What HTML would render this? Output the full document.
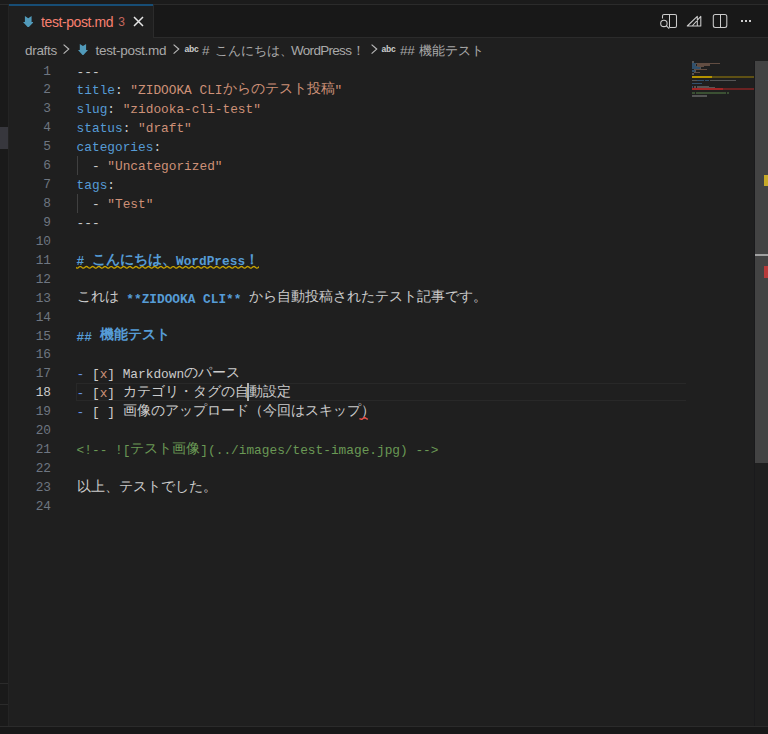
<!DOCTYPE html>
<html><head><meta charset="utf-8">
<style>
*{margin:0;padding:0;box-sizing:border-box}
html,body{width:768px;height:734px;overflow:hidden;background:#1f1f1f}
body{position:relative;font-family:"Liberation Sans",sans-serif}
.a{position:absolute}
#topstrip{left:0;top:0;width:768px;height:4px;background:#1b1b1b}
#topline{left:0;top:4px;width:768px;height:1px;background:#2b2b2b}
#left{left:0;top:5px;width:8px;height:721px;background:#1a1a1a}
#leftb{left:8px;top:5px;width:1px;height:721px;background:#242424}
#leftsel{left:0;top:127px;width:8px;height:22px;background:#37373d}
#tabbar{left:9px;top:5px;width:759px;height:32px;background:#181818}
#tabbarb{left:9px;top:37px;width:759px;height:1px;background:#2b2b2b}
#tab{left:9px;top:4px;width:144px;height:34px;background:#1f1f1f}
#tabtop{left:9px;top:4px;width:144px;height:2px;background:#174d75}
#tabr{left:153px;top:5px;width:1px;height:32px;background:#2b2b2b}
.tabt{left:41px;top:15.05px;font-size:14px;letter-spacing:-0.4px;color:#f88070;white-space:nowrap;line-height:1}
.tab3{left:118.3px;top:15.74px;font-size:12px;color:#c4665c;line-height:1}
.bc{top:43.57px;font-size:13.5px;letter-spacing:-0.3px;color:#a9a9a9;white-space:nowrap;line-height:1}
.abc{top:44.8px;font-size:8.5px;font-weight:bold;color:#cccccc;line-height:8px;letter-spacing:-0.2px}
#status{left:0;top:726px;width:768px;height:1px;background:#2b2b2b}
#statusbg{left:0;top:727px;width:768px;height:7px;background:#181818}
.ln{position:absolute;left:9px;width:42px;text-align:right;height:18.93px;line-height:18.93px;font-family:"Liberation Mono",monospace;font-size:12.8px;color:#6e7681}
.ln.cur{color:#cccccc}
.cl{position:absolute;left:76.6px;height:18.93px;line-height:18.93px;font-family:"Liberation Mono",monospace;font-size:12.8px;white-space:nowrap;color:#cccccc}
.cl span{vertical-align:top;position:relative;top:1px}
.cl span.j{display:inline-block;font-size:14px;overflow:visible;white-space:nowrap;position:relative;top:-1.3px}
.d{color:#cccccc}.k{color:#569cd6}.p{color:#cccccc}.s{color:#ce9178}
.h{color:#569cd6;font-weight:bold}.b{color:#569cd6;font-weight:bold}
.l{color:#6796e6}.x{color:#ce9178}.t{color:#cccccc}.c{color:#6a9955}
#curline{left:76px;top:383px;width:610px;height:18px;border:1px solid #282828;border-right:none}
.guide{left:76.5px;width:1px;background:#404040}
#caret{left:247px;top:382.5px;width:2px;height:18.5px;background:#aeafad}
#scroll{left:754px;top:61px;width:14px;height:402px;background:#434343}
#scrollb{left:754px;top:61px;width:1px;height:665px;background:#1a1a1c}
.ov{position:absolute}
.mm{position:absolute;height:1.6px}
.bj{font-size:13px;letter-spacing:0;white-space:nowrap}
</style></head><body>
<div id="topstrip" class="a"></div>
<div id="topline" class="a"></div>
<div id="left" class="a"></div>
<div id="leftb" class="a"></div>
<div id="leftsel" class="a"></div>
<div class="a" style="left:0;top:683px;width:8px;height:1px;background:#2b2b2b"></div>
<div class="a" style="left:0;top:704px;width:8px;height:1px;background:#2b2b2b"></div>
<div id="tabbar" class="a"></div>
<div id="tabbarb" class="a"></div>
<div id="tab" class="a"></div>
<div id="tabtop" class="a"></div>
<div id="tabr" class="a"></div>
<svg class="a" style="left:22.9px;top:15.8px" width="10.6" height="11.7" viewBox="0 0 10 11.5" preserveAspectRatio="none"><path d="M1.8 0 L4.95 2.1 L8.1 0 L8.1 6 L10 6 L4.95 11.5 L0 6 L1.8 6 Z" fill="#519aba"/></svg>
<div class="a tabt">test-post.md</div>
<div class="a tab3">3</div>
<svg class="a" style="left:133.3px;top:15.5px" width="11" height="11" viewBox="0 0 11 11"><path d="M1 1 L10 10 M10 1 L1 10" stroke="#e6e6e6" stroke-width="1.5"/></svg>

<!-- breadcrumbs -->
<div class="a bc" id="bc1" style="left:25px">drafts</div>
<svg class="a" style="left:62.5px;top:44.2px" width="7" height="11" viewBox="0 0 7 11"><path d="M0.6 0.6 L5.7 5.1 L0.6 9.6" stroke="#b8b8b8" stroke-width="1.2" fill="none"/></svg>
<svg class="a" style="left:77.9px;top:43.6px" width="10" height="11.5" viewBox="0 0 10 11.5"><path d="M1.8 0 L4.95 2.1 L8.1 0 L8.1 6 L10 6 L4.95 11.5 L0 6 L1.8 6 Z" fill="#519aba"/></svg>
<div class="a bc" id="bc2" style="left:95.5px">test-post.md</div>
<svg class="a" style="left:172.5px;top:44.2px" width="7" height="11" viewBox="0 0 7 11"><path d="M0.6 0.6 L5.7 5.1 L0.6 9.6" stroke="#b8b8b8" stroke-width="1.2" fill="none"/></svg>
<div class="a abc" style="left:184.6px">abc</div>
<div class="a bc" id="bc3" style="left:202px">#</div>
<div class="a bc bj" id="bc4" style="left:215px;width:78px">こんにちは、</div>
<div class="a bc" id="bc5" style="left:291px;letter-spacing:-0.7px">WordPress</div>
<div class="a bc bj" id="bc6" style="left:352px;width:13px">！</div>
<svg class="a" style="left:370.5px;top:44.2px" width="7" height="11" viewBox="0 0 7 11"><path d="M0.6 0.6 L5.7 5.1 L0.6 9.6" stroke="#b8b8b8" stroke-width="1.2" fill="none"/></svg>
<div class="a abc" style="left:381.4px">abc</div>
<div class="a bc" id="bc7" style="left:400px">##</div>
<div class="a bc bj" id="bc8" style="left:419px;width:65px">機能テスト</div>

<!-- top right icons -->
<svg class="a" style="left:656px;top:10px" width="24" height="22" viewBox="0 0 24 22">
 <path d="M6.5 8.6 V6 Q6.5 4.5 8 4.5 H19 Q20.5 4.5 20.5 6 V16 Q20.5 17.5 19 17.5 H13.5" stroke="#cccccc" stroke-width="1.05" fill="none"/>
 <path d="M13.5 4.5 V17.5" stroke="#cccccc" stroke-width="1.05"/>
 <circle cx="7.9" cy="13.4" r="3.2" stroke="#cccccc" stroke-width="1.05" fill="none"/>
 <path d="M10.2 15.7 L13.2 18.7" stroke="#cccccc" stroke-width="1.1"/>
</svg>
<svg class="a" style="left:684px;top:12px" width="20" height="18" viewBox="0 0 20 18">
 <path d="M3.3 14 L13.3 4.3 V14 Z M8.2 14 L16.8 4.3 V14 Z" stroke="#cccccc" stroke-width="1.05" fill="none" stroke-linejoin="round"/>
</svg>
<svg class="a" style="left:710px;top:11px" width="20" height="20" viewBox="0 0 20 20">
 <rect x="3.3" y="3.5" width="13.5" height="13" rx="2" stroke="#cccccc" stroke-width="1.05" fill="none"/>
 <path d="M10.5 3.5 V16.5" stroke="#cccccc" stroke-width="1.05"/>
</svg>
<div class="a" style="left:740.8px;top:20px;width:2px;height:2px;background:#cccccc"></div>
<div class="a" style="left:744.8px;top:20px;width:2px;height:2px;background:#cccccc"></div>
<div class="a" style="left:748.8px;top:20px;width:2px;height:2px;background:#cccccc"></div>

<!-- editor -->
<div id="curline" class="a"></div>
<div class="a guide" style="top:156px;height:18.9px"></div>
<div class="a guide" style="top:194px;height:18.9px"></div>
<div class="ln" style="top:62.50px">1</div>
<div class="ln" style="top:81.43px">2</div>
<div class="ln" style="top:100.36px">3</div>
<div class="ln" style="top:119.29px">4</div>
<div class="ln" style="top:138.22px">5</div>
<div class="ln" style="top:157.15px">6</div>
<div class="ln" style="top:176.08px">7</div>
<div class="ln" style="top:195.01px">8</div>
<div class="ln" style="top:213.94px">9</div>
<div class="ln" style="top:232.87px">10</div>
<div class="ln" style="top:251.80px">11</div>
<div class="ln" style="top:270.73px">12</div>
<div class="ln" style="top:289.66px">13</div>
<div class="ln" style="top:308.59px">14</div>
<div class="ln" style="top:327.52px">15</div>
<div class="ln" style="top:346.45px">16</div>
<div class="ln" style="top:365.38px">17</div>
<div class="ln cur" style="top:384.31px">18</div>
<div class="ln" style="top:403.24px">19</div>
<div class="ln" style="top:422.17px">20</div>
<div class="ln" style="top:441.10px">21</div>
<div class="ln" style="top:460.03px">22</div>
<div class="ln" style="top:478.96px">23</div>
<div class="ln" style="top:497.89px">24</div>
<div class="cl" style="top:62.50px"><span class="d">---</span></div>
<div class="cl" style="top:81.43px"><span class="k">title</span><span class="p">:&nbsp;</span><span class="s">&quot;ZIDOOKA&nbsp;CLI</span><span class="s j" style="width:112.00px">からのテスト投稿</span><span class="s">&quot;</span></div>
<div class="cl" style="top:100.36px"><span class="k">slug</span><span class="p">:&nbsp;</span><span class="s">&quot;zidooka-cli-test&quot;</span></div>
<div class="cl" style="top:119.29px"><span class="k">status</span><span class="p">:&nbsp;</span><span class="s">&quot;draft&quot;</span></div>
<div class="cl" style="top:138.22px"><span class="k">categories</span><span class="p">:</span></div>
<div class="cl" style="top:157.15px"><span class="p">&nbsp;&nbsp;-&nbsp;</span><span class="s">&quot;Uncategorized&quot;</span></div>
<div class="cl" style="top:176.08px"><span class="k">tags</span><span class="p">:</span></div>
<div class="cl" style="top:195.01px"><span class="p">&nbsp;&nbsp;-&nbsp;</span><span class="s">&quot;Test&quot;</span></div>
<div class="cl" style="top:213.94px"><span class="d">---</span></div>
<div class="cl" style="top:251.80px"><span class="h">#&nbsp;</span><span class="h j" style="width:84.00px">こんにちは、</span><span class="h">WordPress</span><span class="h j" style="width:14.00px">！</span></div>
<div class="cl" style="top:289.66px"><span class="t j" style="width:42.00px">これは</span><span class="t">&nbsp;</span><span class="b">**ZIDOOKA&nbsp;CLI**</span><span class="t">&nbsp;</span><span class="t j" style="width:238.00px">から自動投稿されたテスト記事です。</span></div>
<div class="cl" style="top:327.52px"><span class="h">##&nbsp;</span><span class="h j" style="width:70.00px">機能テスト</span></div>
<div class="cl" style="top:365.38px"><span class="l">-</span><span class="t">&nbsp;[</span><span class="x">x</span><span class="t">]&nbsp;Markdown</span><span class="t j" style="width:56.00px">のパース</span></div>
<div class="cl" style="top:384.31px"><span class="l">-</span><span class="t">&nbsp;[</span><span class="x">x</span><span class="t">]&nbsp;</span><span class="t j" style="width:168.00px">カテゴリ・タグの自動設定</span></div>
<div class="cl" style="top:403.24px"><span class="l">-</span><span class="t">&nbsp;[&nbsp;]&nbsp;</span><span class="t j" style="width:252.00px">画像のアップロード（今回はスキップ）</span></div>
<div class="cl" style="top:441.10px"><span class="c">&lt;!--&nbsp;![</span><span class="c j" style="width:70.00px">テスト画像</span><span class="c">](../images/test-image.jpg)&nbsp;--&gt;</span></div>
<div class="cl" style="top:478.96px"><span class="t j" style="width:140.00px">以上、テストでした。</span></div>
<div id="caret" class="a"></div>
<svg class="a" style="left:76px;top:265px" width="183" height="4" viewBox="0 0 183 4"><path d="M0 3 L0.00 2.62 L0.50 2.93 L1.00 3.09 L1.50 3.05 L2.00 2.82 L2.50 2.46 L3.00 2.06 L3.50 1.72 L4.00 1.53 L4.50 1.53 L5.00 1.72 L5.50 2.06 L6.00 2.46 L6.50 2.82 L7.00 3.05 L7.50 3.09 L8.00 2.93 L8.50 2.62 L9.00 2.22 L9.50 1.84 L10.00 1.58 L10.50 1.50 L11.00 1.62 L11.50 1.91 L12.00 2.30 L12.50 2.69 L13.00 2.98 L13.50 3.10 L14.00 3.02 L14.50 2.76 L15.00 2.38 L15.50 1.98 L16.00 1.67 L16.50 1.51 L17.00 1.55 L17.50 1.78 L18.00 2.14 L18.50 2.54 L19.00 2.88 L19.50 3.07 L20.00 3.07 L20.50 2.88 L21.00 2.54 L21.50 2.14 L22.00 1.78 L22.50 1.55 L23.00 1.51 L23.50 1.67 L24.00 1.98 L24.50 2.38 L25.00 2.76 L25.50 3.02 L26.00 3.10 L26.50 2.98 L27.00 2.69 L27.50 2.30 L28.00 1.91 L28.50 1.62 L29.00 1.50 L29.50 1.58 L30.00 1.84 L30.50 2.22 L31.00 2.62 L31.50 2.93 L32.00 3.09 L32.50 3.05 L33.00 2.82 L33.50 2.46 L34.00 2.06 L34.50 1.72 L35.00 1.53 L35.50 1.53 L36.00 1.72 L36.50 2.06 L37.00 2.46 L37.50 2.82 L38.00 3.05 L38.50 3.09 L39.00 2.93 L39.50 2.62 L40.00 2.22 L40.50 1.84 L41.00 1.58 L41.50 1.50 L42.00 1.62 L42.50 1.91 L43.00 2.30 L43.50 2.69 L44.00 2.98 L44.50 3.10 L45.00 3.02 L45.50 2.76 L46.00 2.38 L46.50 1.98 L47.00 1.67 L47.50 1.51 L48.00 1.55 L48.50 1.78 L49.00 2.14 L49.50 2.54 L50.00 2.88 L50.50 3.07 L51.00 3.07 L51.50 2.88 L52.00 2.54 L52.50 2.14 L53.00 1.78 L53.50 1.55 L54.00 1.51 L54.50 1.67 L55.00 1.98 L55.50 2.38 L56.00 2.76 L56.50 3.02 L57.00 3.10 L57.50 2.98 L58.00 2.69 L58.50 2.30 L59.00 1.91 L59.50 1.62 L60.00 1.50 L60.50 1.58 L61.00 1.84 L61.50 2.22 L62.00 2.62 L62.50 2.93 L63.00 3.09 L63.50 3.05 L64.00 2.82 L64.50 2.46 L65.00 2.06 L65.50 1.72 L66.00 1.53 L66.50 1.53 L67.00 1.72 L67.50 2.06 L68.00 2.46 L68.50 2.82 L69.00 3.05 L69.50 3.09 L70.00 2.93 L70.50 2.62 L71.00 2.22 L71.50 1.84 L72.00 1.58 L72.50 1.50 L73.00 1.62 L73.50 1.91 L74.00 2.30 L74.50 2.69 L75.00 2.98 L75.50 3.10 L76.00 3.02 L76.50 2.76 L77.00 2.38 L77.50 1.98 L78.00 1.67 L78.50 1.51 L79.00 1.55 L79.50 1.78 L80.00 2.14 L80.50 2.54 L81.00 2.88 L81.50 3.07 L82.00 3.07 L82.50 2.88 L83.00 2.54 L83.50 2.14 L84.00 1.78 L84.50 1.55 L85.00 1.51 L85.50 1.67 L86.00 1.98 L86.50 2.38 L87.00 2.76 L87.50 3.02 L88.00 3.10 L88.50 2.98 L89.00 2.69 L89.50 2.30 L90.00 1.91 L90.50 1.62 L91.00 1.50 L91.50 1.58 L92.00 1.84 L92.50 2.22 L93.00 2.62 L93.50 2.93 L94.00 3.09 L94.50 3.05 L95.00 2.82 L95.50 2.46 L96.00 2.06 L96.50 1.72 L97.00 1.53 L97.50 1.53 L98.00 1.72 L98.50 2.06 L99.00 2.46 L99.50 2.82 L100.00 3.05 L100.50 3.09 L101.00 2.93 L101.50 2.62 L102.00 2.22 L102.50 1.84 L103.00 1.58 L103.50 1.50 L104.00 1.62 L104.50 1.91 L105.00 2.30 L105.50 2.69 L106.00 2.98 L106.50 3.10 L107.00 3.02 L107.50 2.76 L108.00 2.38 L108.50 1.98 L109.00 1.67 L109.50 1.51 L110.00 1.55 L110.50 1.78 L111.00 2.14 L111.50 2.54 L112.00 2.88 L112.50 3.07 L113.00 3.07 L113.50 2.88 L114.00 2.54 L114.50 2.14 L115.00 1.78 L115.50 1.55 L116.00 1.51 L116.50 1.67 L117.00 1.98 L117.50 2.38 L118.00 2.76 L118.50 3.02 L119.00 3.10 L119.50 2.98 L120.00 2.69 L120.50 2.30 L121.00 1.91 L121.50 1.62 L122.00 1.50 L122.50 1.58 L123.00 1.84 L123.50 2.22 L124.00 2.62 L124.50 2.93 L125.00 3.09 L125.50 3.05 L126.00 2.82 L126.50 2.46 L127.00 2.06 L127.50 1.72 L128.00 1.53 L128.50 1.53 L129.00 1.72 L129.50 2.06 L130.00 2.46 L130.50 2.82 L131.00 3.05 L131.50 3.09 L132.00 2.93 L132.50 2.62 L133.00 2.22 L133.50 1.84 L134.00 1.58 L134.50 1.50 L135.00 1.62 L135.50 1.91 L136.00 2.30 L136.50 2.69 L137.00 2.98 L137.50 3.10 L138.00 3.02 L138.50 2.76 L139.00 2.38 L139.50 1.98 L140.00 1.67 L140.50 1.51 L141.00 1.55 L141.50 1.78 L142.00 2.14 L142.50 2.54 L143.00 2.88 L143.50 3.07 L144.00 3.07 L144.50 2.88 L145.00 2.54 L145.50 2.14 L146.00 1.78 L146.50 1.55 L147.00 1.51 L147.50 1.67 L148.00 1.98 L148.50 2.38 L149.00 2.76 L149.50 3.02 L150.00 3.10 L150.50 2.98 L151.00 2.69 L151.50 2.30 L152.00 1.91 L152.50 1.62 L153.00 1.50 L153.50 1.58 L154.00 1.84 L154.50 2.22 L155.00 2.62 L155.50 2.93 L156.00 3.09 L156.50 3.05 L157.00 2.82 L157.50 2.46 L158.00 2.06 L158.50 1.72 L159.00 1.53 L159.50 1.53 L160.00 1.72 L160.50 2.06 L161.00 2.46 L161.50 2.82 L162.00 3.05 L162.50 3.09 L163.00 2.93 L163.50 2.62 L164.00 2.22 L164.50 1.84 L165.00 1.58 L165.50 1.50 L166.00 1.62 L166.50 1.91 L167.00 2.30 L167.50 2.69 L168.00 2.98 L168.50 3.10 L169.00 3.02 L169.50 2.76 L170.00 2.38 L170.50 1.98 L171.00 1.67 L171.50 1.51 L172.00 1.55 L172.50 1.78 L173.00 2.14 L173.50 2.54 L174.00 2.88 L174.50 3.07 L175.00 3.07 L175.50 2.88 L176.00 2.54 L176.50 2.14 L177.00 1.78 L177.50 1.55 L178.00 1.51 L178.50 1.67 L179.00 1.98 L179.50 2.38 L180.00 2.76 L180.50 3.02 L181.00 3.10 L181.50 2.98 L182.00 2.69 L182.50 2.30 L183.00 1.91 L183.50 1.62" stroke="#c9a400" stroke-width="1.3" fill="none"/></svg>
<svg class="a" style="left:359px;top:416px" width="10" height="4" viewBox="0 0 10 4"><path d="M0.4 2.6 L2.8 3.4 L5.4 1.4 L8.8 3.4" stroke="#e8504a" stroke-width="1.4" fill="none" stroke-linejoin="round"/></svg>

<!-- minimap -->
<div class="mm" style="left:692.00px;top:61.00px;width:2.31px;background:#555555"></div>
<div class="mm" style="left:692.00px;top:62.55px;width:3.85px;background:#30506c"></div>
<div class="mm" style="left:695.85px;top:62.55px;width:0.77px;background:#555555"></div>
<div class="mm" style="left:697.39px;top:62.55px;width:6.16px;background:#624d42"></div>
<div class="mm" style="left:704.32px;top:62.55px;width:15.40px;background:#624d42"></div>
<div class="mm" style="left:692.00px;top:64.10px;width:3.08px;background:#30506c"></div>
<div class="mm" style="left:695.08px;top:64.10px;width:0.77px;background:#555555"></div>
<div class="mm" style="left:696.62px;top:64.10px;width:13.86px;background:#624d42"></div>
<div class="mm" style="left:692.00px;top:65.65px;width:4.62px;background:#30506c"></div>
<div class="mm" style="left:696.62px;top:65.65px;width:0.77px;background:#555555"></div>
<div class="mm" style="left:698.16px;top:65.65px;width:5.39px;background:#624d42"></div>
<div class="mm" style="left:692.00px;top:67.20px;width:7.70px;background:#30506c"></div>
<div class="mm" style="left:699.70px;top:67.20px;width:0.77px;background:#555555"></div>
<div class="mm" style="left:693.54px;top:68.75px;width:0.77px;background:#555555"></div>
<div class="mm" style="left:695.08px;top:68.75px;width:11.55px;background:#624d42"></div>
<div class="mm" style="left:692.00px;top:70.30px;width:3.08px;background:#30506c"></div>
<div class="mm" style="left:695.08px;top:70.30px;width:0.77px;background:#555555"></div>
<div class="mm" style="left:693.54px;top:71.85px;width:0.77px;background:#555555"></div>
<div class="mm" style="left:695.08px;top:71.85px;width:4.62px;background:#624d42"></div>
<div class="mm" style="left:692.00px;top:73.40px;width:2.31px;background:#555555"></div>
<div class="mm" style="left:692.00px;top:76.50px;width:0.77px;background:#30506c"></div>
<div class="mm" style="left:693.54px;top:76.50px;width:17.71px;background:#30506c"></div>
<div class="mm" style="left:692.00px;top:79.60px;width:4.62px;background:#555555"></div>
<div class="mm" style="left:697.39px;top:79.60px;width:6.93px;background:#30506c"></div>
<div class="mm" style="left:705.09px;top:79.60px;width:3.85px;background:#30506c"></div>
<div class="mm" style="left:709.71px;top:79.60px;width:26.18px;background:#555555"></div>
<div class="mm" style="left:692.00px;top:82.70px;width:1.54px;background:#30506c"></div>
<div class="mm" style="left:694.31px;top:82.70px;width:7.70px;background:#30506c"></div>
<div class="mm" style="left:692.00px;top:85.80px;width:0.77px;background:#354a6e"></div>
<div class="mm" style="left:693.54px;top:85.80px;width:0.77px;background:#555555"></div>
<div class="mm" style="left:694.31px;top:85.80px;width:0.77px;background:#624d42"></div>
<div class="mm" style="left:695.08px;top:85.80px;width:0.77px;background:#555555"></div>
<div class="mm" style="left:696.62px;top:85.80px;width:12.32px;background:#555555"></div>
<div class="mm" style="left:692.00px;top:87.35px;width:0.77px;background:#354a6e"></div>
<div class="mm" style="left:693.54px;top:87.35px;width:0.77px;background:#555555"></div>
<div class="mm" style="left:694.31px;top:87.35px;width:0.77px;background:#624d42"></div>
<div class="mm" style="left:695.08px;top:87.35px;width:0.77px;background:#555555"></div>
<div class="mm" style="left:696.62px;top:87.35px;width:18.48px;background:#555555"></div>
<div class="mm" style="left:692.00px;top:88.90px;width:0.77px;background:#354a6e"></div>
<div class="mm" style="left:693.54px;top:88.90px;width:0.77px;background:#555555"></div>
<div class="mm" style="left:695.08px;top:88.90px;width:0.77px;background:#555555"></div>
<div class="mm" style="left:696.62px;top:88.90px;width:27.72px;background:#555555"></div>
<div class="mm" style="left:692.00px;top:92.00px;width:3.08px;background:#3b5033"></div>
<div class="mm" style="left:695.85px;top:92.00px;width:30.03px;background:#3b5033"></div>
<div class="mm" style="left:726.65px;top:92.00px;width:2.31px;background:#3b5033"></div>
<div class="mm" style="left:692.00px;top:95.10px;width:15.40px;background:#555555"></div>
<div class="mm" style="left:692px;top:76.20px;width:62px;height:2px;background:#5e5014"></div>
<div class="mm" style="left:692px;top:76.20px;width:20px;height:2px;background:#b39200"></div>
<div class="mm" style="left:692px;top:88.30px;width:62px;height:2px;background:#6a2222"></div>
<div class="mm" style="left:692px;top:88.30px;width:31px;height:2px;background:#a02626"></div>

<!-- scrollbar -->
<div id="scroll" class="a"></div>
<div id="scrollb" class="a"></div>
<div class="a" style="left:764px;top:175px;width:4px;height:11px;background:#c7a928"></div>
<div class="a" style="left:755px;top:254px;width:13px;height:1.5px;background:#a0a0a0"></div>
<div class="a" style="left:764px;top:266px;width:4px;height:11.5px;background:#b83a3a"></div>

<div id="status" class="a"></div>
<div id="statusbg" class="a"></div>
</body></html>
